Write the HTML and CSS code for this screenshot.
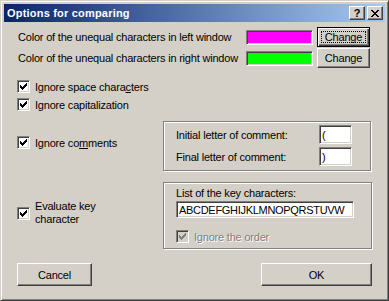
FILE: index.html
```html
<!DOCTYPE html>
<html>
<head>
<meta charset="utf-8">
<link rel="stylesheet" href="styles.css">
</head>
<body>
<div class="window">
  <div class="titlebar">
    <span class="title">Options for comparing</span>
    <div class="tbtns">
      <span class="tbtn help">?</span>
      <span class="tbtn close"><svg width="8" height="7" viewBox="0 0 8 7" shape-rendering="crispEdges"><path d="M0 0h2v1h-2zM6 0h2v1h-2zM1 1h2v1h-2zM5 1h2v1h-2zM2 2h4v1h-4zM3 3h2v1h-2zM2 4h4v1h-4zM1 5h2v1h-2zM5 5h2v1h-2zM0 6h2v1h-2zM6 6h2v1h-2z" fill="#000"/></svg></span>
    </div>
  </div>
  <div class="content">
    <div class="color-row">
      <span class="label">Color of the unequal characters in left window</span>
      <span class="swatch magenta"></span>
      <button class="btn small default"><span class="focus">Change</span></button>
    </div>
    <div class="color-row">
      <span class="label">Color of the unequal characters in right window</span>
      <span class="swatch green"></span>
      <button class="btn small">Change</button>
    </div>

    <div class="checks">
      <label class="check"><span class="box"><svg width="7" height="7" viewBox="0 0 7 7" shape-rendering="crispEdges"><path d="M6 0h1v1h-1zM5 1h2v1h-2zM0 2h1v1h-1zM4 2h3v1h-3zM0 3h2v1h-2zM3 3h3v1h-3zM0 4h5v1h-5zM1 5h3v1h-3zM2 6h1v1h-1z"/></svg></span><span>Ignore space chara<u>c</u>ters</span></label>
      <label class="check"><span class="box"><svg width="7" height="7" viewBox="0 0 7 7" shape-rendering="crispEdges"><path d="M6 0h1v1h-1zM5 1h2v1h-2zM0 2h1v1h-1zM4 2h3v1h-3zM0 3h2v1h-2zM3 3h3v1h-3zM0 4h5v1h-5zM1 5h3v1h-3zM2 6h1v1h-1z"/></svg></span><span>Ignore capitalization</span></label>
    </div>

    <div class="section comments">
      <div class="side">
        <label class="check"><span class="box"><svg width="7" height="7" viewBox="0 0 7 7" shape-rendering="crispEdges"><path d="M6 0h1v1h-1zM5 1h2v1h-2zM0 2h1v1h-1zM4 2h3v1h-3zM0 3h2v1h-2zM3 3h3v1h-3zM0 4h5v1h-5zM1 5h3v1h-3zM2 6h1v1h-1z"/></svg></span><span>Ignore co<u>m</u>ments</span></label>
      </div>
      <div class="group comment-group">
        <div class="field-row"><span>Initial letter of comment:</span><span class="input short">(</span></div>
        <div class="field-row"><span>Final letter of comment:</span><span class="input short">)</span></div>
      </div>
    </div>

    <div class="section keys">
      <div class="side">
        <label class="check"><span class="box"><svg width="7" height="7" viewBox="0 0 7 7" shape-rendering="crispEdges"><path d="M6 0h1v1h-1zM5 1h2v1h-2zM0 2h1v1h-1zM4 2h3v1h-3zM0 3h2v1h-2zM3 3h3v1h-3zM0 4h5v1h-5zM1 5h3v1h-3zM2 6h1v1h-1z"/></svg></span><span class="two">Evaluate key<br>character</span></label>
      </div>
      <div class="group key-group">
        <div class="key-label">List of the key characters:</div>
        <span class="input long">ABCDEFGHIJKLMNOPQRSTUVW</span>
        <label class="check disabled"><span class="box"><svg width="7" height="7" viewBox="0 0 7 7" shape-rendering="crispEdges"><path d="M6 0h1v1h-1zM5 1h2v1h-2zM0 2h1v1h-1zM4 2h3v1h-3zM0 3h2v1h-2zM3 3h3v1h-3zM0 4h5v1h-5zM1 5h3v1h-3zM2 6h1v1h-1z"/></svg></span><span>Ignore the order</span></label>
      </div>
    </div>

    <div class="bottom">
      <button class="btn cancel">Cancel</button>
      <button class="btn ok">OK</button>
    </div>
  </div>
</div>
</body>
</html>
```
FILE: styles.css
```css
html, body {
  margin: 0;
  padding: 0;
  background: #D4D0C8;
}
body {
  font-family: "Liberation Sans", Arial, sans-serif;
  font-size: 11px;
  letter-spacing: -0.2px;
  color: #000;
}
.window {
  box-sizing: border-box;
  width: 389px;
  height: 301px;
  background: #D4D0C8;
  border: 1px solid;
  border-color: #D4D0C8 #404040 #404040 #D4D0C8;
  box-shadow: inset 1px 1px #fff, inset -1px -1px #808080;
  padding: 3px;
  display: flex;
  flex-direction: column;
}
.titlebar {
  height: 18px;
  flex: none;
  background: linear-gradient(to right, #0A246A, #A6CAF0);
  display: flex;
  align-items: center;
  justify-content: space-between;
  padding: 0 2px 0 3px;
}
.title {
  color: #fff;
  font-weight: bold;
  font-size: 11px;
  letter-spacing: 0.2px;
}
.tbtns {
  display: flex;
  gap: 2px;
}
.tbtn {
  box-sizing: border-box;
  width: 16px;
  height: 14px;
  background: #D4D0C8;
  border: 1px solid;
  border-color: #fff #404040 #404040 #fff;
  box-shadow: inset -1px -1px #808080;
  display: flex;
  align-items: center;
  justify-content: center;
}
.tbtn.help {
  font-weight: bold;
  font-size: 11px;
  line-height: 1;
  padding-top: 1px;
}
.content {
  flex: 1;
  padding: 5px 13px 0 13px;
  display: flex;
  flex-direction: column;
}
.color-row {
  display: flex;
  align-items: center;
  height: 20px;
  margin-right: 2px;
  margin-left: 1px;
}
.color-row + .color-row {
  margin-top: 1px;
}
.label {
  flex: 1;
  white-space: nowrap;
}
.swatch {
  box-sizing: border-box;
  flex: none;
  width: 67px;
  height: 15px;
  border: 1px solid;
  border-color: #808080 #fff #fff #808080;
  box-shadow: inset 1px 1px #404040, inset -1px -1px #D4D0C8;
  margin-right: 4px;
}
.swatch.magenta { background: #FF00FF; }
.swatch.green { background: #00FF00; }
.btn {
  box-sizing: border-box;
  flex: none;
  font-family: inherit;
  font-size: 11px;
  letter-spacing: inherit;
  color: #000;
  background: #D4D0C8;
  border: 1px solid;
  border-color: #fff #404040 #404040 #fff;
  box-shadow: inset -1px -1px #808080;
  padding: 0;
  margin: 0;
  display: flex;
  align-items: center;
  justify-content: center;
}
.btn.small {
  width: 53px;
  height: 20px;
}
.btn.default {
  border-color: #000;
  box-shadow: inset 1px 1px #fff, inset -1px -1px #404040, inset -2px -2px #808080;
  padding: 3px;
}
.focus {
  flex: 1;
  align-self: stretch;
  border: 1px dotted #000;
  display: flex;
  align-items: center;
  justify-content: center;
}
.checks {
  margin-top: 12px;
  display: flex;
  flex-direction: column;
  gap: 5px;
}
.check {
  display: flex;
  align-items: center;
  gap: 5px;
  height: 13px;
  white-space: nowrap;
}
.box {
  box-sizing: border-box;
  flex: none;
  width: 13px;
  height: 13px;
  background: #fff;
  border: 1px solid;
  border-color: #808080 #fff #fff #808080;
  box-shadow: inset 1px 1px #404040, inset -1px -1px #D4D0C8;
  display: flex;
  align-items: center;
  justify-content: center;
}
.box svg { display: block; }
.check.disabled .box { background: #D4D0C8; }
.check.disabled .box svg { fill: #808080; }
.check.disabled span:last-child {
  color: #808080;
  text-shadow: 1px 1px #fff;
}
.section {
  display: flex;
  margin-right: 1px;
}
.comments { margin-top: 10px; }
.keys { margin-top: 11px; }
.side {
  width: 146px;
  flex: none;
}
.comments .side { padding-top: 15px; }
.keys .side { padding-top: 18px; }
.keys .check { height: 26px; }
.two { line-height: 13px; }
.group {
  box-sizing: border-box;
  flex: 1;
  border: 1px solid #808080;
  box-shadow: inset 1px 1px #fff, 1px 1px #fff;
}
.comment-group {
  height: 50px;
  padding: 3px 18px 0 12px;
  display: flex;
  flex-direction: column;
  gap: 3px;
}
.field-row {
  display: flex;
  align-items: center;
  justify-content: space-between;
  height: 19px;
}
.input {
  box-sizing: border-box;
  height: 19px;
  background: #fff;
  border: 1px solid;
  border-color: #808080 #fff #fff #808080;
  box-shadow: inset 1px 1px #404040, inset -1px -1px #D4D0C8;
  padding: 0 2px;
  display: flex;
  align-items: center;
  white-space: nowrap;
  overflow: hidden;
}
.input.short { width: 33px; }
.key-group {
  height: 67px;
  padding: 4px 17px 0 12px;
  display: flex;
  flex-direction: column;
}
.key-label { line-height: 13px; }
.input.long {
  margin-top: 1px;
  width: 178px;
  letter-spacing: -0.3px;
}
.key-group .check { margin-top: 7px; }
.bottom {
  margin-top: 14px;
  display: flex;
  justify-content: space-between;
}
.btn.cancel { width: 75px; height: 23px; }
.btn.ok { width: 111px; height: 23px; }
```
